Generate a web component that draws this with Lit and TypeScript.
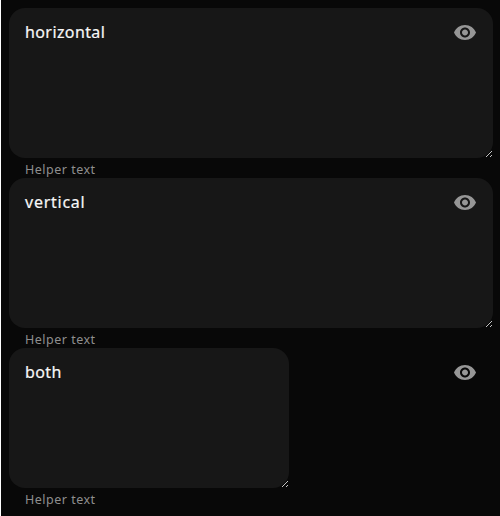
import { LitElement, html, css, svg } from "lit";
import { customElement, property } from "lit/decorators.js";
import { classMap } from "lit/directives/class-map.js";

const gripDots = [[0, 5], [1, 4], [2, 3], [3, 2], [4, 1], [5, 0], [4, 5], [5, 4]];

@customElement("text-area-field")
class TextAreaField extends LitElement {
  @property() value = "";
  @property() helper = "";
  @property({ type: Boolean }) compact = false;
  @property({ type: Boolean }) wide = false;

  static styles = css`
    :host { display: block; }
    .row { display: flex; align-items: flex-start; position: relative; }
    .area {
      box-sizing: border-box;
      position: relative;
      width: 484px;
      height: 150px;
      padding: 13px 48px 12px 16px;
      border-radius: 16px;
      background: #171717;
    }
    .compact { width: 280px; height: 140px; }
    .value {
      display: block;
      color: #f7f7f7;
      font-size: 16px;
      font-weight: 400;
      line-height: 22px;
      letter-spacing: 0.4px;
      -webkit-text-stroke: 0.2px #f7f7f7;
    }
    .wide { letter-spacing: 0.75px; }
    .grip { position: absolute; right: 1px; bottom: 1px; display: block; }
    .eye { position: absolute; right: 16px; top: 12px; display: block; }
    .helper {
      height: 20px;
      padding: 4px 16px 0;
      box-sizing: border-box;
      color: #8f8f8f;
      font-size: 12.5px;
      line-height: 16px;
      letter-spacing: 0.5px;
    }
  `;

  render() {
    return html`
      <div class="row">
        <div class=${classMap({ area: true, compact: this.compact })}>
          <span class=${classMap({ value: true, wide: this.wide })}>${this.value}</span>
          <svg class="grip" width="6" height="6" shape-rendering="crispEdges">
            ${gripDots.map(([x, y]) => svg`<rect x=${x} y=${y} width="1" height="1" fill="#c4c4c4"></rect>`)}
          </svg>
        </div>
        <svg class="eye" width="24" height="24" viewBox="0 -0.5 24 24" fill="#969696">
          <path d="M12 4.5C7 4.5 2.73 7.61 1 12c1.73 4.39 6 7.5 11 7.5s9.27-3.11 11-7.5c-1.73-4.39-6-7.5-11-7.5zM12 17c-2.76 0-5-2.24-5-5s2.24-5 5-5 5 2.24 5 5-2.24 5-5 5zm0-8c-1.66 0-3 1.34-3 3s1.34 3 3 3 3-1.34 3-3-1.34-3-3-3z"></path>
        </svg>
      </div>
      <div class="helper">${this.helper}</div>
    `;
  }
}

@customElement("app-root")
class AppRoot extends LitElement {
  static styles = css`
    :host {
      display: block;
      box-sizing: border-box;
      height: 516px;
      overflow: hidden;
      padding: 8px 7px 0 8px;
      border-left: 1px solid #ffffff;
      background: #080808;
      font-family: "Noto Sans", "Open Sans", sans-serif;
    }
  `;

  render() {
    return html`
      <text-area-field value="horizontal" helper="Helper text"></text-area-field>
      <text-area-field value="vertical" helper="Helper text" wide></text-area-field>
      <text-area-field value="both" helper="Helper text" compact></text-area-field>
    `;
  }
}
